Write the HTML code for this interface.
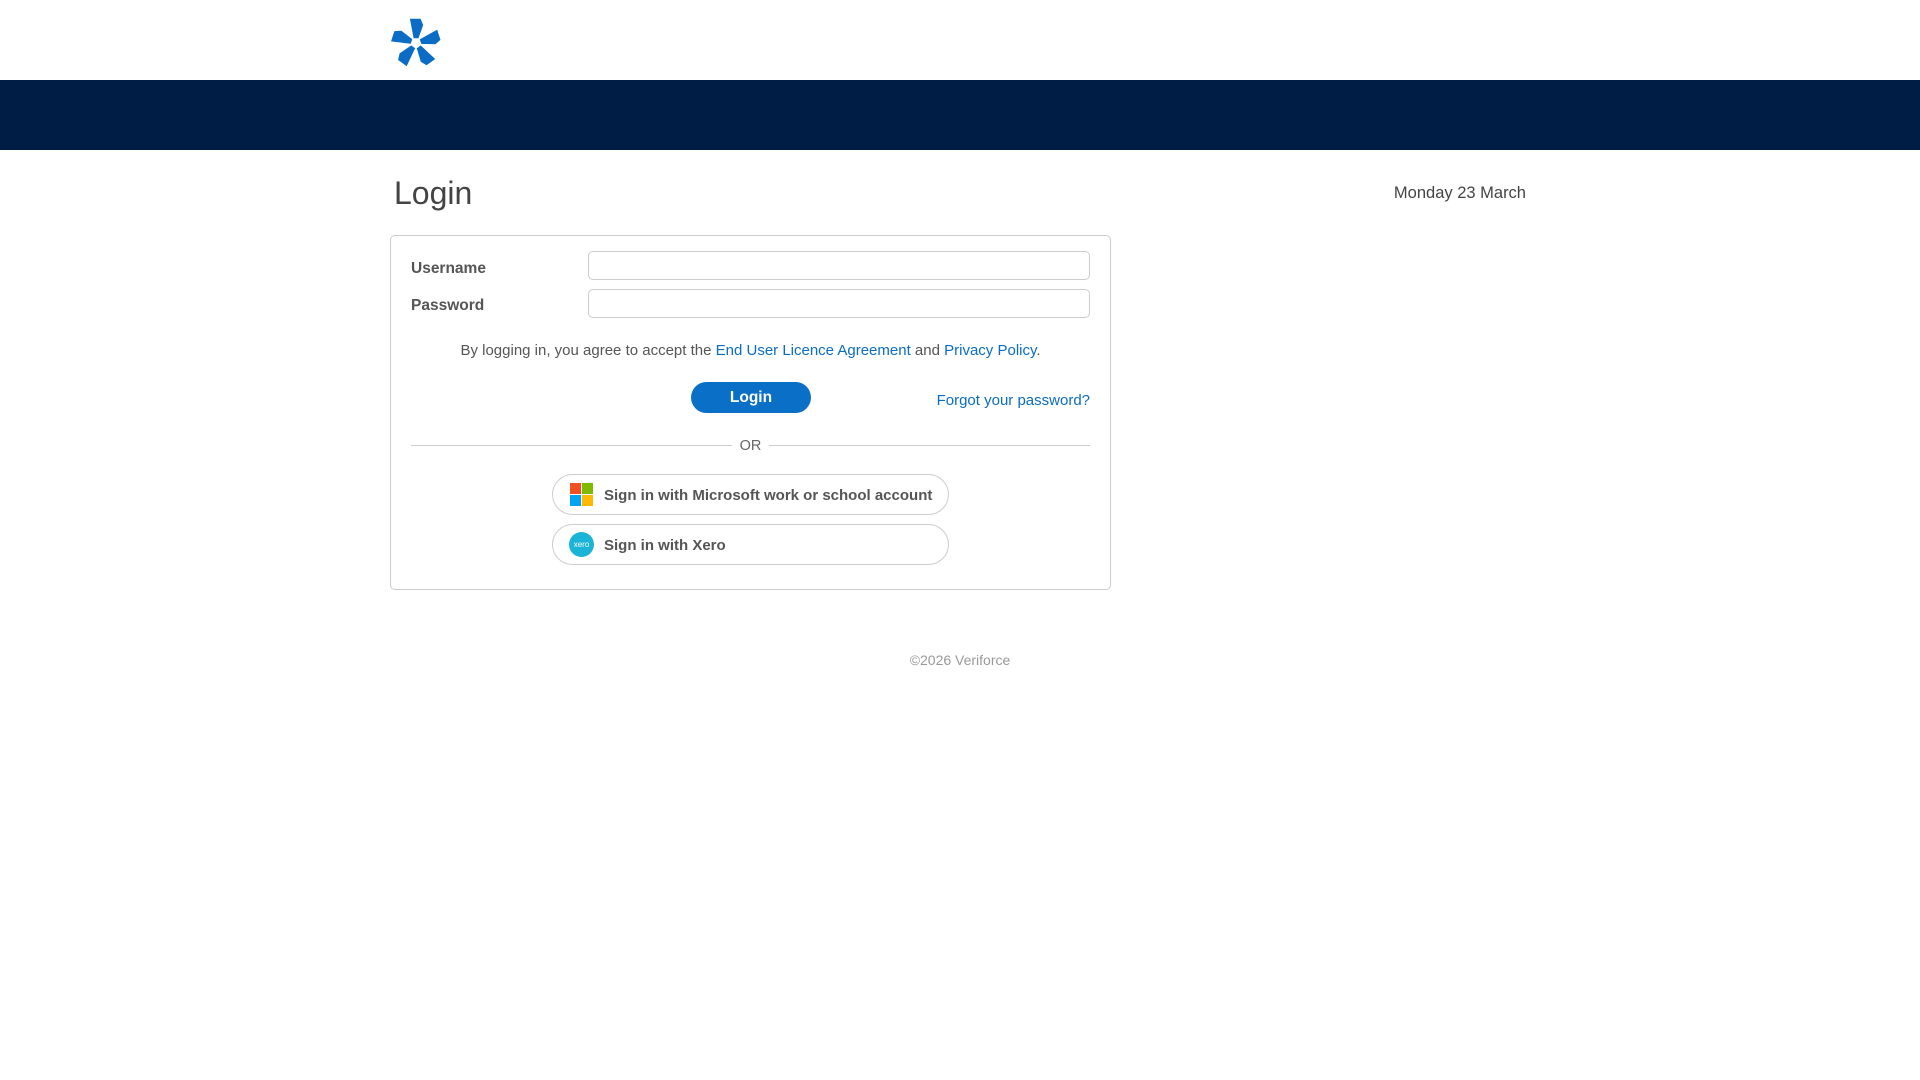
<!DOCTYPE html>
<html><head><meta charset="utf-8"><style>
*{box-sizing:border-box}
body{margin:0;width:1920px;height:1080px;background:#fff;font-family:"Liberation Sans",Arial,sans-serif;position:relative;overflow:hidden}
.abs{position:absolute}
.navy{left:0;top:80px;width:1920px;height:70px;background:#001e45}
h1{position:absolute;left:394px;top:175px;margin:0;font-size:32px;font-weight:normal;color:#444}
.date{right:394px;top:184px;font-size:16.5px;color:#444}
.card{left:390px;top:235px;width:721px;height:355px;border:1px solid #ccc;border-radius:5px}
.lbl{font-size:15.5px;font-weight:bold;color:#555}
.inp{left:588px;width:502px;height:29px;border:1px solid #ccc;border-radius:5px}
.agree{left:390px;width:721px;top:342px;text-align:center;font-size:15px;color:#555;white-space:nowrap}
a{color:#0a6cc4;text-decoration:none}
.btn{left:691px;top:382px;width:120px;height:31px;border-radius:16px;background:#0a6fc7;color:#fff;font-weight:bold;font-size:15.5px;text-align:center;line-height:32px}
.forgot{right:830px;top:392px;font-size:15px}
.line{top:445px;height:1px;background:#ccc}
.or{left:730px;width:41px;top:438px;text-align:center;font-size:14.5px;color:#666}
.sso{left:552px;width:397px;height:41px;border:1px solid #ccc;border-radius:21px;font-size:15px;font-weight:bold;color:#555;line-height:41px;padding-left:51px;white-space:nowrap}
.foot{left:0;width:1920px;top:652px;text-align:center;font-size:14px;color:#999}
</style></head><body>
<svg class="abs" style="left:390px;top:15px" width="52" height="52" viewBox="0 0 52 52">
<g fill="#0a6cc4" stroke="#fff" stroke-width="1.5">
<g transform="translate(26,28)">
<path d="M-7 -25 L5 -25 L8 -18 L3 -4 L-3 -4 Z"/>
<path d="M-7 -25 L5 -25 L8 -18 L3 -4 L-3 -4 Z" transform="rotate(72)"/>
<path d="M-7 -25 L5 -25 L8 -18 L3 -4 L-3 -4 Z" transform="rotate(144)"/>
<path d="M-7 -25 L5 -25 L8 -18 L3 -4 L-3 -4 Z" transform="rotate(216)"/>
<path d="M-7 -25 L5 -25 L8 -18 L3 -4 L-3 -4 Z" transform="rotate(288)"/>
</g></g></svg>
<div class="abs navy"></div>
<h1>Login</h1>
<div class="abs date">Monday 23 March</div>
<div class="abs card"></div>
<div class="abs lbl" style="left:411px;top:260px">Username</div>
<div class="abs lbl" style="left:411px;top:297px">Password</div>
<div class="abs inp" style="top:251px"></div>
<div class="abs inp" style="top:289px"></div>
<div class="abs agree">By logging in, you agree to accept the <a>End User Licence Agreement</a> and <a>Privacy Policy</a>.</div>
<div class="abs btn">Login</div>
<a class="abs forgot">Forgot your password?</a>
<div class="abs line" style="left:411px;width:321px"></div>
<div class="abs line" style="left:769px;width:321px"></div>
<div class="abs or">OR</div>
<div class="abs sso" style="top:474px">Sign in with Microsoft work or school account</div>
<div class="abs sso" style="top:524px">Sign in with Xero</div>
<div class="abs" style="left:570px;top:483px;width:11px;height:11px;background:#f25022"></div>
<div class="abs" style="left:582px;top:483px;width:11px;height:11px;background:#7fba00"></div>
<div class="abs" style="left:570px;top:495px;width:11px;height:11px;background:#00a4ef"></div>
<div class="abs" style="left:582px;top:495px;width:11px;height:11px;background:#ffb900"></div>
<div class="abs" style="left:569px;top:532px;width:25px;height:25px;border-radius:50%;background:#1ab4d7;color:#fff;font-size:8px;text-align:center;line-height:25px">xero</div>
<div class="abs foot">©2026 Veriforce</div>
</body></html>
